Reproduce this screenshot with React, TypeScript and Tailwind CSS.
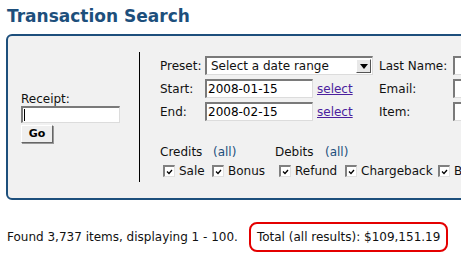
const font = { fontFamily: '"DejaVu Sans", Verdana, sans-serif' }

function Check() {
  return (
    <span className="inline-grid h-[12px] w-[12px] shrink-0 place-items-center border-t-2 border-l-2 border-t-[#808080] border-l-[#808080] border-r border-b border-r-[#e0e0e0] border-b-[#e0e0e0] bg-white">
      <svg width="7" height="6" viewBox="0 0 7 6">
        <path d="M1 2.5 L3 4.5 L6 1" fill="none" stroke="#000" strokeWidth="1.3" />
      </svg>
    </span>
  )
}

function Box({ w }: { w: string }) {
  return (
    <div className={`h-[19px] ${w} shrink-0 border-t-2 border-l-2 border-t-[#7a7a7a] border-l-[#7a7a7a] border-r border-b border-r-[#dcdcdc] border-b-[#dcdcdc] bg-white`} />
  )
}

function DateBox({ value }: { value: string }) {
  return (
    <div className="flex h-[19px] w-[108px] shrink-0 items-center border-t-2 border-l-2 border-t-[#7a7a7a] border-l-[#7a7a7a] border-r border-b border-r-[#dcdcdc] border-b-[#dcdcdc] bg-white pl-[1px] text-black">
      {value}
    </div>
  )
}

function Item({ label, w }: { label: string; w: string }) {
  return (
    <span className={`flex ${w} shrink-0 items-center gap-[4px]`}>
      <Check />
      <span className="whitespace-nowrap">{label}</span>
    </span>
  )
}

export default function App() {
  return (
    <div className="h-[253px] w-[461px] overflow-hidden bg-white text-[12px] text-[#111]" style={font}>
      <h1 className="pl-[7px] pt-[3px] text-[17px] leading-[26px] font-bold text-[#1d4f7c]">Transaction Search</h1>

      <div className="mt-[5px] ml-[6px] flex h-[166px] w-[620px] rounded-[6px] border-2 border-[#1d4f7c] bg-[#f1f1f1]">
        {/* receipt */}
        <div className="flex w-[131px] shrink-0 flex-col justify-center pl-[13px]">
          <div className="leading-[14px]">Receipt:</div>
          <div className="flex h-[17px] w-[99px] items-center border-t-2 border-l-2 border-t-[#7a7a7a] border-l-[#7a7a7a] border-r border-b border-r-[#dcdcdc] border-b-[#dcdcdc] bg-white pl-[1px]">
            <span className="h-[12px] w-px bg-black" />
          </div>
          <button className="mt-[2px] h-[18px] w-[32px] border border-t-white border-l-white border-r-[#666] border-b-[#666] bg-[#efefef] text-[11px] font-bold leading-none text-black shadow-[1px_1px_0_#999]">
            Go
          </button>
        </div>

        <div className="my-[16px] w-px shrink-0 bg-black" />

        {/* filters */}
        <div className="flex shrink-0 flex-col pl-[20px] pt-[20px]">
          <div className="flex gap-[6px]">
            <div className="flex flex-col gap-[4px]">
              <div className="flex h-[19px] items-center">
                <span className="w-[45px] shrink-0">Preset:</span>
                <div className="flex h-[19px] w-[168px] shrink-0 items-center justify-between border-t-2 border-l-2 border-t-[#7a7a7a] border-l-[#7a7a7a] border-r border-b border-r-[#dcdcdc] border-b-[#dcdcdc] bg-white pl-[4px] pr-[1px]">
                  <span className="whitespace-nowrap">Select a date range</span>
                  <span className="grid h-[14px] w-[15px] place-items-center border border-t-white border-l-white border-r-[#555] border-b-[#555] bg-[#e8e8e8]">
                    <svg width="8" height="5" viewBox="0 0 8 5"><path d="M0 0 H8 L4 5 Z" fill="#000" /></svg>
                  </span>
                </div>
              </div>
              <div className="flex h-[19px] items-center">
                <span className="w-[45px] shrink-0">Start:</span>
                <DateBox value="2008-01-15" />
                <a className="ml-[4px] text-[#4b1f9e] underline">select</a>
              </div>
              <div className="flex h-[19px] items-center">
                <span className="w-[45px] shrink-0">End:</span>
                <DateBox value="2008-02-15" />
                <a className="ml-[4px] text-[#4b1f9e] underline">select</a>
              </div>
            </div>
            <div className="flex flex-col gap-[4px]">
              <div className="flex h-[19px] items-center">
                <span className="w-[74px] shrink-0 whitespace-nowrap">Last Name:</span>
                <Box w="w-[80px]" />
              </div>
              <div className="flex h-[19px] items-center">
                <span className="w-[74px] shrink-0">Email:</span>
                <Box w="w-[80px]" />
              </div>
              <div className="flex h-[19px] items-center">
                <span className="w-[74px] shrink-0">Item:</span>
                <Box w="w-[80px]" />
              </div>
            </div>
          </div>

          <div className="mt-[23px] flex leading-[16px]">
            <span className="w-[53px] shrink-0">Credits</span>
            <span className="w-[62px] shrink-0 text-[#1d4f7c]">(all)</span>
            <span className="w-[50px] shrink-0">Debits</span>
            <span className="text-[#1d4f7c]">(all)</span>
          </div>
          <div className="mt-[3px] flex items-center pl-[3px] leading-[16px]">
            <Item label="Sale" w="w-[49px]" />
            <Item label="Bonus" w="w-[67px]" />
            <Item label="Refund" w="w-[66px]" />
            <Item label="Chargeback" w="w-[93px]" />
            <Item label="Bonus" w="w-[70px]" />
          </div>
        </div>
      </div>

      <div className="mt-[22px] flex items-center pl-[7px]">
        <span className="whitespace-nowrap">Found 3,737 items, displaying 1 - 100.</span>
        <span className="ml-[11px] whitespace-nowrap rounded-[8px] border-2 border-[#e40000] px-[6px] py-[5px] leading-[16px]">
          Total (all results): $109,151.19
        </span>
      </div>
    </div>
  )
}
